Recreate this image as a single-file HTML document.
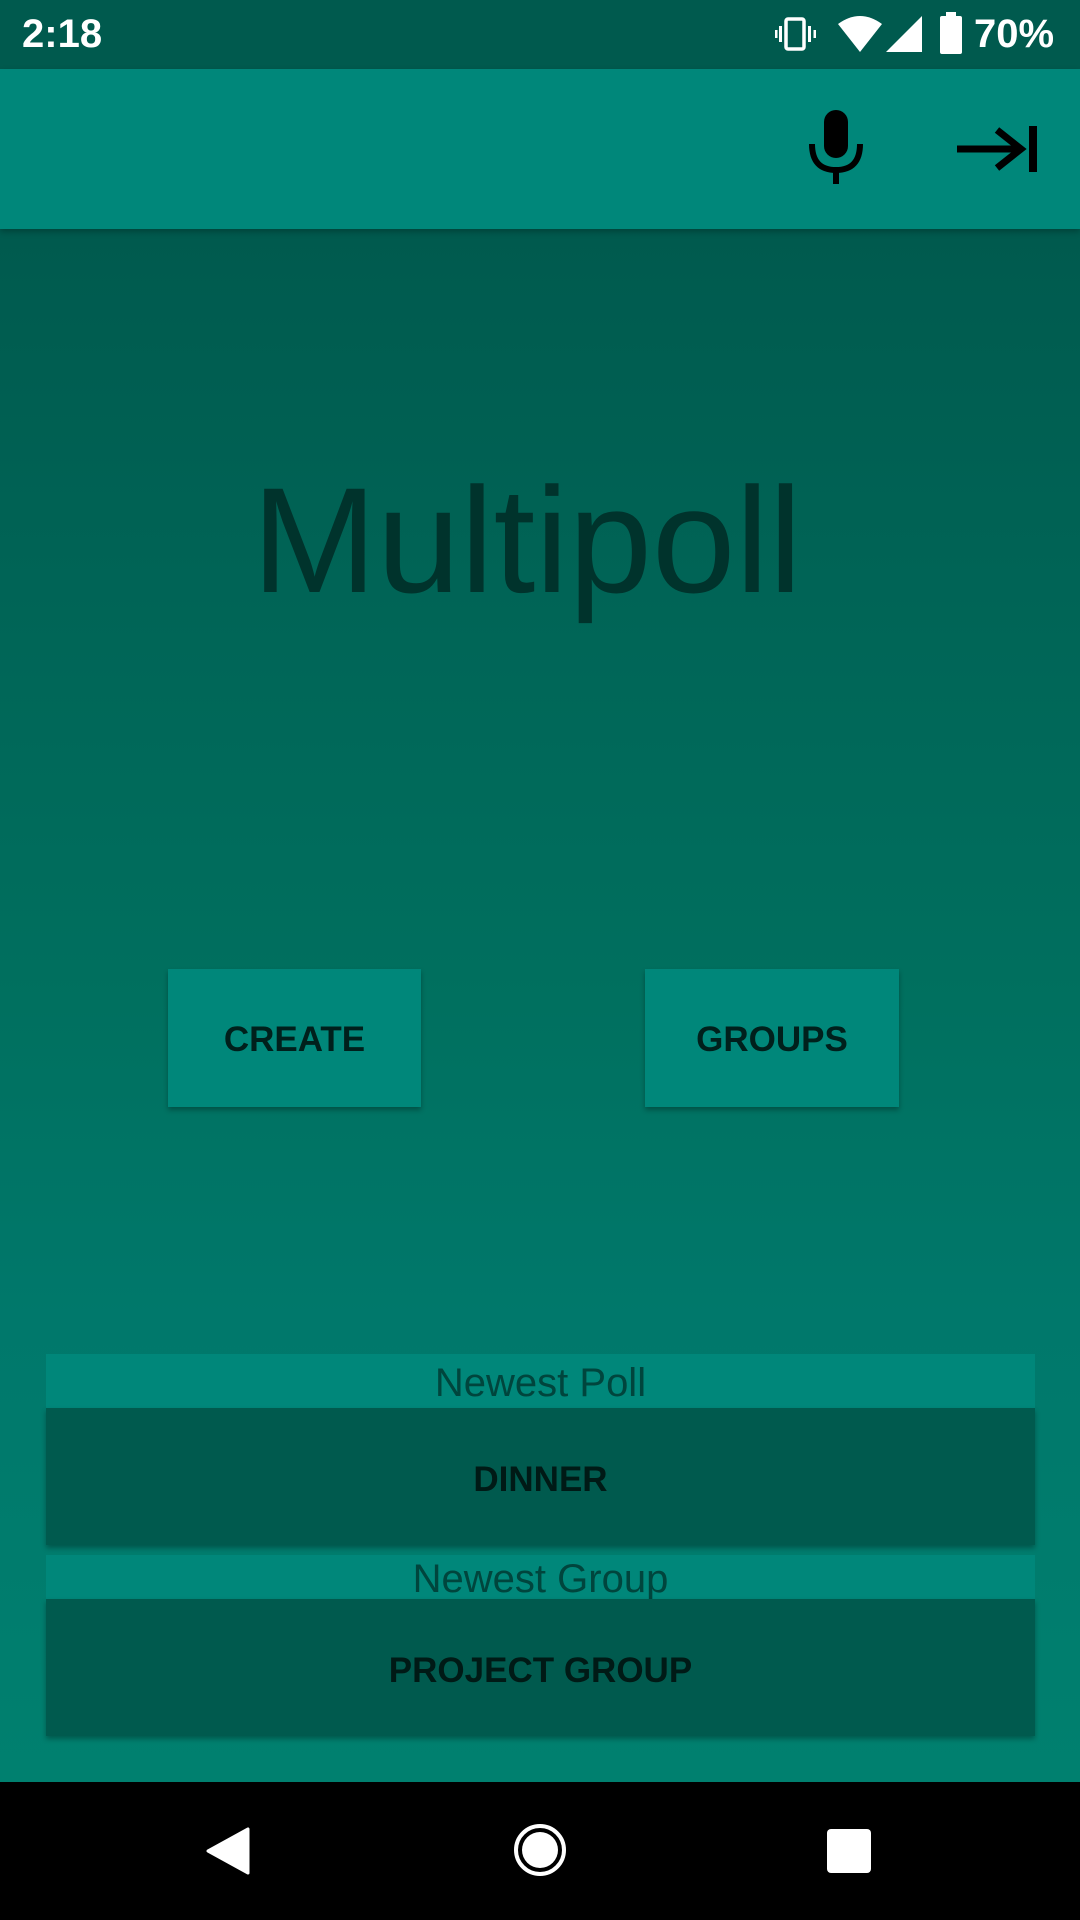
<!DOCTYPE html>
<html><head><meta charset="utf-8"><style>
*{margin:0;padding:0;box-sizing:border-box}
body{width:1080px;height:1920px;overflow:hidden;font-family:"Liberation Sans",sans-serif;position:relative;background:#00796b}
.abs{position:absolute}
#status{left:0;top:0;width:1080px;height:69px;background:#005a4e;color:#fff}
#appbar{left:0;top:69px;width:1080px;height:160px;background:#00877a;box-shadow:0 3px 6px rgba(0,0,0,.25);z-index:2}
#main{left:0;top:229px;width:1080px;height:1553px;background:linear-gradient(#005a4e 0%,#00705f 50%,#00786b 70%,#00806f 100%)}
.btn{background:#00877a;color:#00201c;font-size:35px;font-weight:bold;display:flex;align-items:center;justify-content:center;box-shadow:0 3px 5px rgba(0,0,0,.3);padding-top:4px}
.lbl{left:46px;width:989px;background:#00877a;color:#00453d;font-size:40px;display:flex;align-items:center;justify-content:center;padding-top:4px}
.item{left:46px;width:989px;background:#005a4e;color:#001a16;font-size:35px;font-weight:bold;display:flex;align-items:center;justify-content:center;box-shadow:0 3px 5px rgba(0,0,0,.3);padding-top:6px}
#nav{left:0;top:1782px;width:1080px;height:138px;background:#000}
</style></head><body>
<div id="status" class="abs">
 <div class="abs" style="left:22px;top:12px;font-size:40px;font-weight:bold">2:18</div>
 <svg class="abs" style="left:775px;top:15px" width="42" height="38" viewBox="0 0 42 38"><rect x="11" y="4" width="18" height="30" rx="2" fill="none" stroke="#fff" stroke-width="3.5"/><rect x="4" y="11" width="3" height="16" fill="#fff"/><rect x="33" y="11" width="3" height="16" fill="#fff"/><rect x="0" y="15" width="2.5" height="8" fill="#fff"/><rect x="38.5" y="15" width="2.5" height="8" fill="#fff"/></svg>
 <svg class="abs" style="left:836px;top:14px" width="48" height="40" viewBox="0 0 48 40"><path d="M2 10 Q24 -6 46 10 L24 38 Z" fill="#fff"/></svg>
 <svg class="abs" style="left:884px;top:14px" width="40" height="40" viewBox="0 0 40 40"><path d="M38 2 V38 H2 Z" fill="#fff"/></svg>
 <svg class="abs" style="left:938px;top:12px" width="26" height="44" viewBox="0 0 26 44"><rect x="8" y="0" width="10" height="5" fill="#fff"/><rect x="2" y="4" width="22" height="38" rx="2" fill="#fff"/></svg>
 <div class="abs" style="left:974px;top:12px;font-size:40px;font-weight:bold">70%</div>
</div>
<div id="appbar" class="abs">
 <svg class="abs" style="left:806px;top:41px" width="60" height="76" viewBox="0 0 60 76"><rect x="18" y="0" width="24" height="48" rx="12" fill="#000"/><path d="M6 34 Q6 60 30 60 Q54 60 54 34" fill="none" stroke="#000" stroke-width="6"/><rect x="27" y="58" width="6" height="16" fill="#000"/></svg>
 <svg class="abs" style="left:955px;top:55px" width="84" height="50" viewBox="0 0 84 50"><path d="M2 25 H64" stroke="#000" stroke-width="7"/><path d="M42 6 L66 25 L42 44" fill="none" stroke="#000" stroke-width="7"/><rect x="74" y="2" width="8" height="46" fill="#000"/></svg>
</div>
<div id="main" class="abs">
 <div class="abs" style="left:0;width:1054px;top:236px;text-align:center;font-size:150px;color:#00332c;line-height:1">Multipoll</div>
 <div class="abs btn" style="left:168px;top:740px;width:253px;height:138px">CREATE</div>
 <div class="abs btn" style="left:645px;top:740px;width:254px;height:138px">GROUPS</div>
 <div class="abs lbl" style="top:1125px;height:54px">Newest Poll</div>
 <div class="abs item" style="top:1179px;height:137px">DINNER</div>
 <div class="abs lbl" style="top:1326px;height:44px">Newest Group</div>
 <div class="abs item" style="top:1370px;height:137px">PROJECT GROUP</div>
</div>
<div id="nav" class="abs">
 <svg class="abs" style="left:204px;top:45px" width="46" height="48" viewBox="0 0 46 48"><path d="M44 2 V46 L4 24 Z" fill="#fff" stroke="#fff" stroke-width="3" stroke-linejoin="round"/></svg>
 <svg class="abs" style="left:513px;top:41px" width="54" height="54" viewBox="0 0 54 54"><circle cx="27" cy="27" r="24" fill="none" stroke="#fff" stroke-width="4"/><circle cx="27" cy="27" r="18" fill="#fff"/></svg>
 <div class="abs" style="left:827px;top:47px;width:44px;height:44px;background:#fff;border-radius:4px"></div>
</div>
</body></html>
